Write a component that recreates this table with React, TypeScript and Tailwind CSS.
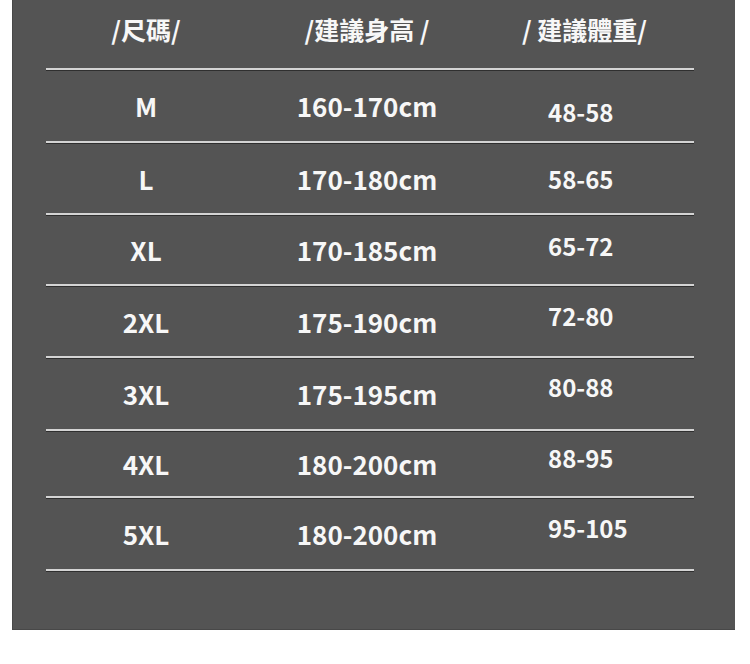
const rows = [
  { size: "M", height: "160-170cm", weight: "48-58", h: "h-[71px]", shift: "translate-y-[6px]" },
  { size: "L", height: "170-180cm", weight: "58-65", h: "h-[70px]", shift: "translate-y-[1px]" },
  { size: "XL", height: "170-185cm", weight: "65-72", h: "h-[69px]", shift: "-translate-y-[4px]" },
  { size: "2XL", height: "175-190cm", weight: "72-80", h: "h-[70px]", shift: "-translate-y-[5px]" },
  { size: "3XL", height: "175-195cm", weight: "80-88", h: "h-[71px]", shift: "-translate-y-[7px]" },
  { size: "4XL", height: "180-200cm", weight: "88-95", h: "h-[65px]", shift: "-translate-y-[6px]" },
  { size: "5XL", height: "180-200cm", weight: "95-105", h: "h-[71px]", shift: "-translate-y-[6px]" },
];

function Line() {
  return <div className="h-[2px] bg-[#d4d4d4] shadow-[0_1px_0_#2f2f2f]" />;
}

export default function App() {
  return (
    <div className="w-[750px] h-[664px] bg-white font-['Noto_Sans_CJK_TC','Noto_Sans',sans-serif]">
      <div className="ml-[12px] w-[723px] h-[630px] bg-[#545454] border-l border-b border-[#484848] pl-[33px] pr-[41px] text-[#f7f7f7]">
        <div className="h-[68px] grid grid-cols-[200px_242px_206px] items-center text-[25px] font-semibold">
          <div className="text-center -translate-y-[4px]">/尺碼/</div>
          <div className="text-center -translate-y-[4px]">/建議身高 /</div>
          <div className="pl-[34px] -translate-y-[4px]">/ 建議體重/</div>
        </div>
        {rows.map((r) => (
          <div key={r.size}>
            <Line />
            <div className={`${r.h} grid grid-cols-[200px_242px_206px] items-center`}>
              <div className="text-center text-[26px] font-bold">{r.size}</div>
              <div className="text-center text-[26px] font-bold">{r.height}</div>
              <div className={`pl-[60px] text-[24px] font-semibold ${r.shift}`}>{r.weight}</div>
            </div>
          </div>
        ))}
        <Line />
      </div>
    </div>
  );
}
